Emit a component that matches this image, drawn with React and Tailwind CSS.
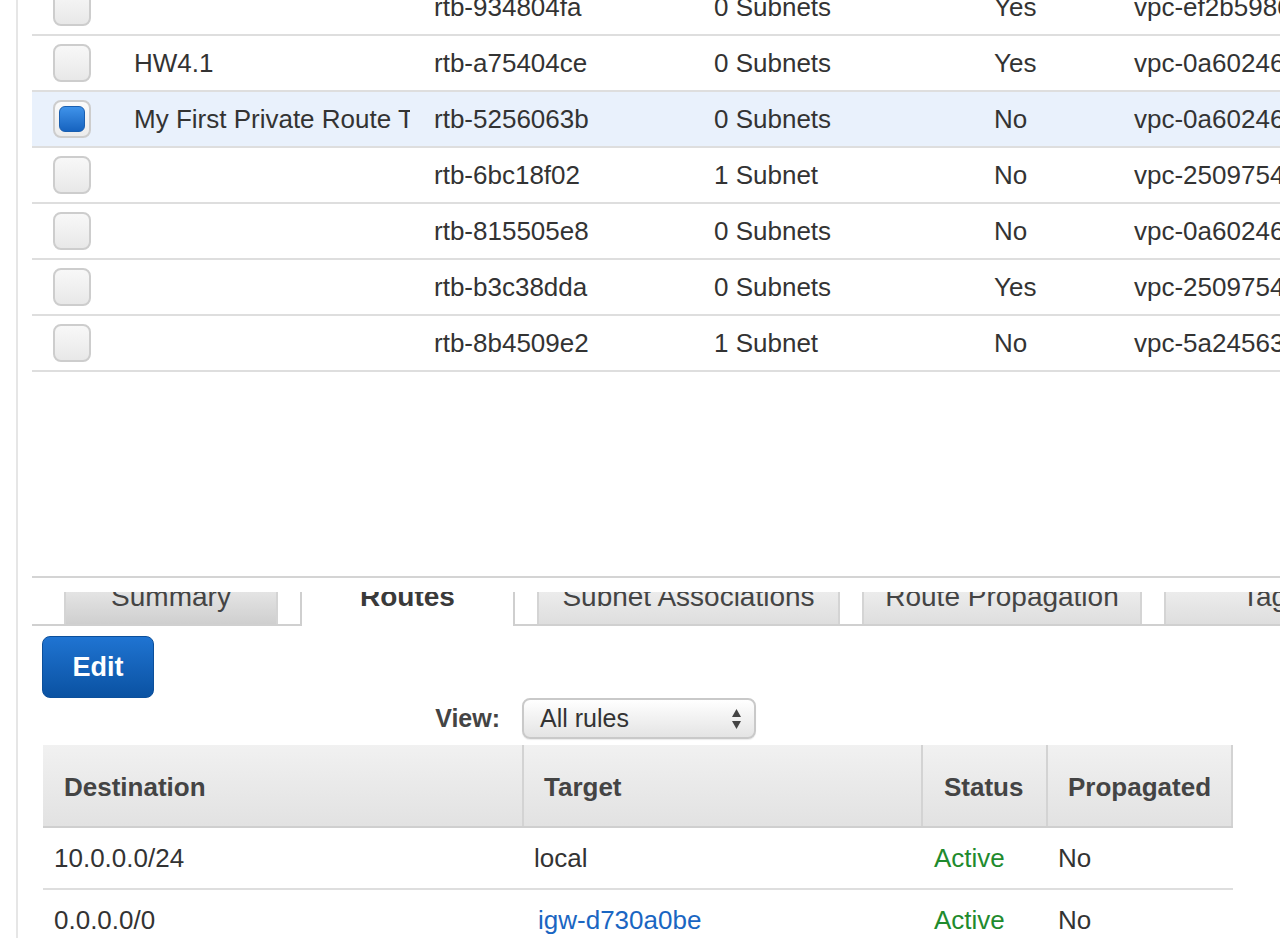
import React from 'react';

const rows = [
    { name: '', rtb: 'rtb-934804fa', subnets: '0 Subnets', main: 'Yes', vpc: 'vpc-ef2b5986' },
    { name: 'HW4.1', rtb: 'rtb-a75404ce', subnets: '0 Subnets', main: 'Yes', vpc: 'vpc-0a602460' },
    { name: 'My First Private Route Table', rtb: 'rtb-5256063b', subnets: '0 Subnets', main: 'No', vpc: 'vpc-0a602460', selected: true },
    { name: '', rtb: 'rtb-6bc18f02', subnets: '1 Subnet', main: 'No', vpc: 'vpc-25097541' },
    { name: '', rtb: 'rtb-815505e8', subnets: '0 Subnets', main: 'No', vpc: 'vpc-0a602460' },
    { name: '', rtb: 'rtb-b3c38dda', subnets: '0 Subnets', main: 'Yes', vpc: 'vpc-25097541' },
    { name: '', rtb: 'rtb-8b4509e2', subnets: '1 Subnet', main: 'No', vpc: 'vpc-5a245631' },
];

const tabs = [
    { label: 'Summary', w: 'w-[214px]', tone: 'from-[#e4e4e4] to-[#cfcfcf]' },
    { label: 'Routes', w: 'w-[215px]', active: true },
    { label: 'Subnet Associations', w: 'w-[303px]', tone: 'from-[#ececec] to-[#dedede]' },
    { label: 'Route Propagation', w: 'w-[280px]', tone: 'from-[#ececec] to-[#dedede]' },
    { label: 'Tags', w: 'w-[215px]', tone: 'from-[#ececec] to-[#dedede]' },
];

const Checkbox = ({ checked }) => (
    <div className={`w-[38px] h-[38px] rounded-[8px] border-2 border-[#cdcdcd] flex items-center justify-center ${checked ? 'bg-gradient-to-b from-[#fbfbfb] to-[#ececec]' : 'bg-gradient-to-b from-[#f8f8f8] to-[#e8e8e8]'}`}>
        {checked && (
            <div className="w-[26px] h-[26px] rounded-[6px] bg-gradient-to-b from-[#3f93ea] to-[#1663bf] border border-[#1a5fb0]" />
        )}
    </div>
);

const App = () => {
    return (
        <div className="w-[1280px] h-[938px] overflow-hidden bg-white flex font-['Liberation_Sans',Arial,sans-serif] text-[#333]">
            <div className="w-[16px] shrink-0" />
            <div className="flex-1 min-w-0 border-l-2 border-[#e6e6e6] pl-[14px]">
                {/* route tables list */}
                <div className="-mt-[20px]">
                    {rows.map((r, i) => (
                        <div
                            key={i}
                            className={`flex items-center h-[56px] border-b-2 border-[#dedede] text-[26px] whitespace-nowrap ${r.selected ? 'bg-[#e9f1fc]' : ''}`}
                        >
                            <div className="w-[80px] shrink-0 flex justify-center">
                                <Checkbox checked={r.selected} />
                            </div>
                            <div className="w-[300px] shrink-0 pl-[22px] pr-[2px] overflow-hidden">
                                <div className="overflow-hidden">{r.name}</div>
                            </div>
                            <div className="w-[280px] shrink-0 pl-[22px]">{r.rtb}</div>
                            <div className="w-[280px] shrink-0 pl-[22px]">{r.subnets}</div>
                            <div className="w-[140px] shrink-0 pl-[22px]">{r.main}</div>
                            <div className="flex-1 pl-[22px] overflow-hidden">{r.vpc}</div>
                        </div>
                    ))}
                </div>

                {/* details pane */}
                <div className="mt-[204px] border-t-2 border-[#d4d4d4] pt-[14px]">
                    <div className="flex items-start h-[34px] border-b-2 border-[#d0d0d0] pl-[32px] gap-[22px] whitespace-nowrap">
                        {tabs.map((t) => (
                            <div
                                key={t.label}
                                className={`${t.w} shrink-0 overflow-hidden border-x-2 text-center text-[28px] ${t.active ? 'h-[34px] bg-white border-[#cfcfcf] font-bold text-[#3a3a3a]' : `h-[32px] bg-gradient-to-b ${t.tone} border-[#d4d4d4] text-[#444]`}`}
                            >
                                <div className="leading-[28px] -mt-[9px]">{t.label}</div>
                            </div>
                        ))}
                    </div>

                    <button className="mt-[10px] ml-[10px] w-[112px] h-[62px] rounded-[8px] border border-[#0b4f9b] bg-gradient-to-b from-[#1f74d2] to-[#0a52a2] text-white font-bold text-[27px] flex items-center justify-center">
                        Edit
                    </button>

                    <div className="flex items-center h-[41px] ml-[11px]">
                        <div className="w-[479px] text-right pr-[22px] font-bold text-[25px] text-[#444]">View:</div>
                        <div className="w-[234px] h-[41px] rounded-[8px] border-2 border-[#c9c9c9] bg-gradient-to-b from-white to-[#e4e4e4] flex items-center justify-between pl-[16px] pr-[12px] text-[25px] text-[#333] shadow-[0_1px_1px_rgba(0,0,0,0.08)]">
                            <span>All rules</span>
                            <svg width="11" height="24" viewBox="0 0 11 24">
                                <polygon points="5.5,2 10,10 1,10" fill="#444" />
                                <polygon points="1,14 10,14 5.5,22" fill="#444" />
                            </svg>
                        </div>
                    </div>

                    {/* routes table */}
                    <div className="mt-[6px] ml-[11px] w-[1190px] text-[26px]">
                        <div className="flex h-[83px] border-b-2 border-[#cfcfcf] bg-gradient-to-b from-[#f1f1f1] to-[#e2e2e2] font-bold text-[#444]">
                            <div className="w-[479px] pl-[21px] pt-[4px] flex items-center">Destination</div>
                            <div className="w-[399px] pl-[20px] pt-[4px] flex items-center border-l-2 border-[#d3d3d3]">Target</div>
                            <div className="w-[125px] pl-[21px] pt-[4px] flex items-center border-l-2 border-[#d3d3d3]">Status</div>
                            <div className="flex-1 pl-[20px] pt-[4px] flex items-center border-x-2 border-[#d3d3d3]">Propagated</div>
                        </div>
                        {[
                            { dest: '10.0.0.0/24', target: 'local', link: false },
                            { dest: '0.0.0.0/0', target: 'igw-d730a0be', link: true },
                        ].map((r) => (
                            <div key={r.dest} className="flex items-center h-[62px] border-b-2 border-[#dedede] text-[#333]">
                                <div className="w-[479px] pl-[11px]">{r.dest}</div>
                                <div className={`w-[399px] ${r.link ? 'pl-[16px] text-[#1a66c2]' : 'pl-[12px]'}`}>{r.target}</div>
                                <div className="w-[125px] pl-[13px] text-[#1f8b2e]">Active</div>
                                <div className="flex-1 pl-[12px]">No</div>
                            </div>
                        ))}
                    </div>
                </div>
            </div>
        </div>
    );
};

export default App;
